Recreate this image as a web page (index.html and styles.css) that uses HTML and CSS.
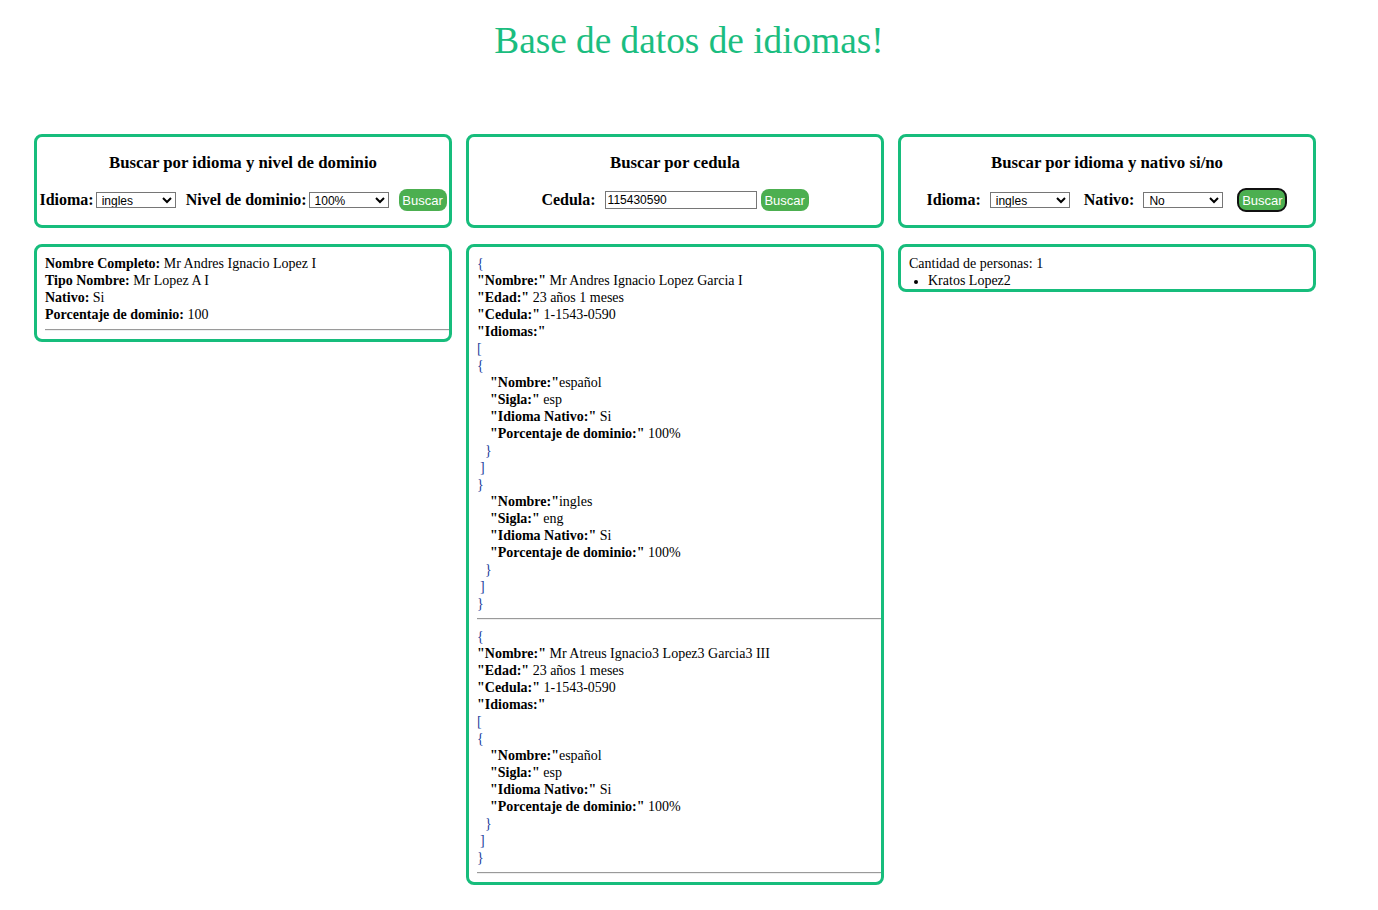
FILE: index.html
```html
<!DOCTYPE html>
<html lang="es">
<head>
<meta charset="utf-8">
<title>Base de datos de idiomas</title>
<link rel="stylesheet" href="styles.css">
</head>
<body>
<h1 class="title">Base de datos de idiomas!</h1>

<div class="grid grid-top">
  <div class="card search">
    <h3 class="card-title">Buscar por idioma y nivel de dominio</h3>
    <div class="controls c1">
      <label class="lbl">Idioma:</label>
      <select class="sel"><option>ingles</option></select>
      <label class="lbl gap-l">Nivel de dominio:</label>
      <select class="sel"><option>100%</option></select>
      <button class="btn gap-b">Buscar</button>
    </div>
  </div>
  <div class="card search">
    <h3 class="card-title">Buscar por cedula</h3>
    <div class="controls c2">
      <label class="lbl">Cedula:</label>
      <input class="inp" type="text" value="115430590">
      <button class="btn">Buscar</button>
    </div>
  </div>
  <div class="card search">
    <h3 class="card-title">Buscar por idioma y nativo si/no</h3>
    <div class="controls c3">
      <label class="lbl">Idioma:</label>
      <select class="sel"><option>ingles</option></select>
      <label class="lbl gap-l">Nativo:</label>
      <select class="sel"><option>No</option></select>
      <button class="btn btn-focus gap-b">Buscar</button>
    </div>
  </div>
</div>

<div class="grid grid-bottom">
  <div class="card result">
    <div class="line"><b>Nombre Completo:</b> Mr Andres Ignacio Lopez I</div>
    <div class="line"><b>Tipo Nombre:</b> Mr Lopez A I</div>
    <div class="line"><b>Nativo:</b> Si</div>
    <div class="line"><b>Porcentaje de dominio:</b> 100</div>
    <hr class="sep">
  </div>

  <div class="card result">
    <div class="line br">{</div>
    <div class="line"><b>"Nombre:"</b> Mr Andres Ignacio Lopez Garcia I</div>
    <div class="line"><b>"Edad:"</b> 23 años 1 meses</div>
    <div class="line"><b>"Cedula:"</b> 1-1543-0590</div>
    <div class="line"><b>"Idiomas:"</b></div>
    <div class="line br">[</div>
    <div class="line br">{</div>
    <div class="line in2"><b>"Nombre:"</b>español</div>
    <div class="line in2"><b>"Sigla:"</b> esp</div>
    <div class="line in2"><b>"Idioma Nativo:"</b> Si</div>
    <div class="line in2"><b>"Porcentaje de dominio:"</b> 100%</div>
    <div class="line br in1b">}</div>
    <div class="line br in1">]</div>
    <div class="line br">}</div>
    <div class="line in2"><b>"Nombre:"</b>ingles</div>
    <div class="line in2"><b>"Sigla:"</b> eng</div>
    <div class="line in2"><b>"Idioma Nativo:"</b> Si</div>
    <div class="line in2"><b>"Porcentaje de dominio:"</b> 100%</div>
    <div class="line br in1b">}</div>
    <div class="line br in1">]</div>
    <div class="line br">}</div>
    <hr class="sep">
    <div class="line br">{</div>
    <div class="line"><b>"Nombre:"</b> Mr Atreus Ignacio3 Lopez3 Garcia3 III</div>
    <div class="line"><b>"Edad:"</b> 23 años 1 meses</div>
    <div class="line"><b>"Cedula:"</b> 1-1543-0590</div>
    <div class="line"><b>"Idiomas:"</b></div>
    <div class="line br">[</div>
    <div class="line br">{</div>
    <div class="line in2"><b>"Nombre:"</b>español</div>
    <div class="line in2"><b>"Sigla:"</b> esp</div>
    <div class="line in2"><b>"Idioma Nativo:"</b> Si</div>
    <div class="line in2"><b>"Porcentaje de dominio:"</b> 100%</div>
    <div class="line br in1b">}</div>
    <div class="line br in1">]</div>
    <div class="line br">}</div>
    <hr class="sep">
  </div>

  <div class="card result">
    <div class="line">Cantidad de personas: 1</div>
    <ul class="list">
      <li class="line">Kratos Lopez2</li>
    </ul>
  </div>
</div>
</body>
</html>
```

FILE: styles.css
```css
html, body {
  margin: 0;
  padding: 0;
  background: #ffffff;
}

body {
  font-family: "Liberation Serif", "Times New Roman", serif;
  color: #000000;
}

.title {
  margin: 0;
  padding-top: 19px;
  height: 115px;
  box-sizing: border-box;
  text-align: center;
  font-weight: normal;
  font-size: 37.3px;
  line-height: 44px;
  color: #1bbd80;
}

.grid {
  display: grid;
  grid-template-columns: 418px 418px 418px;
  column-gap: 14px;
  padding-left: 34px;
  align-items: start;
}

.grid-top {
  margin-top: 19px;
}

.grid-bottom {
  margin-top: 16px;
}

.card {
  border: 3px solid #17bd7c;
  border-radius: 8px;
  box-sizing: border-box;
  background: #ffffff;
}

.search {
  height: 94px;
  padding: 0 3px;
}

.card-title {
  margin: 17px 0 0;
  height: 18px;
  font-size: 16.8px;
  line-height: 18px;
  font-weight: bold;
  text-align: center;
  white-space: nowrap;
}

.controls {
  margin-top: 15px;
  display: flex;
  justify-content: center;
  align-items: center;
  height: 26px;
  white-space: nowrap;
}

.controls > * {
  flex-shrink: 0;
}

.lbl {
  font-size: 16px;
  font-weight: bold;
  line-height: 18px;
  white-space: nowrap;
}

.sel {
  width: 80px;
  height: 16px;
  font-family: "Liberation Sans", Arial, sans-serif;
  font-size: 12px;
  border: 1px solid #767676;
  border-radius: 0;
  padding: 0 0 0 1px;
  margin: 0;
  background: #ffffff;
  color: #000000;
  box-sizing: border-box;
}

.inp {
  width: 152px;
  height: 18px;
  font-family: "Liberation Sans", Arial, sans-serif;
  font-size: 12px;
  border: 1px solid #767676;
  border-radius: 0;
  padding: 0 2px;
  margin: 0;
  box-sizing: border-box;
}

.btn {
  background: #4caf50;
  color: #ffffff;
  border: none;
  border-radius: 8px;
  font-family: "Liberation Sans", Arial, sans-serif;
  font-size: 13px;
  height: 22px;
  width: 48px;
  padding: 0;
  margin: 0;
}

.btn-focus {
  border: 2px solid #111111;
  width: 50px;
  height: 24px;
  border-radius: 9px;
}

.c1 .lbl + .sel { margin-left: 2px; }
.c1 .gap-l { margin-left: 10px; }
.c1 .gap-b { margin-left: 10px; }

.c2 .inp { margin-left: 9px; }
.c2 .btn { margin-left: 4px; }

.c3 .lbl + .sel { margin-left: 9px; }
.c3 .gap-l { margin-left: 14px; }
.c3 .gap-b { margin-left: 14px; }

.result {
  padding: 8px 0 0 8px;
  font-size: 14px;
}

.line {
  font-size: 14px;
  line-height: 17px;
}

.br {
  color: #22409c;
}

.in2 { padding-left: 13px; }
.in1b { padding-left: 8px; }
.in1 { padding-left: 3px; }

.sep {
  margin: 6px 0 8px;
  border: none;
  border-top: 1px solid #9a9a9a;
  border-bottom: 1px solid #eeeeee;
  height: 0;
}

.list {
  margin: 0;
  padding-left: 19px;
}

.list li::marker {
  font-size: 12px;
}
```
